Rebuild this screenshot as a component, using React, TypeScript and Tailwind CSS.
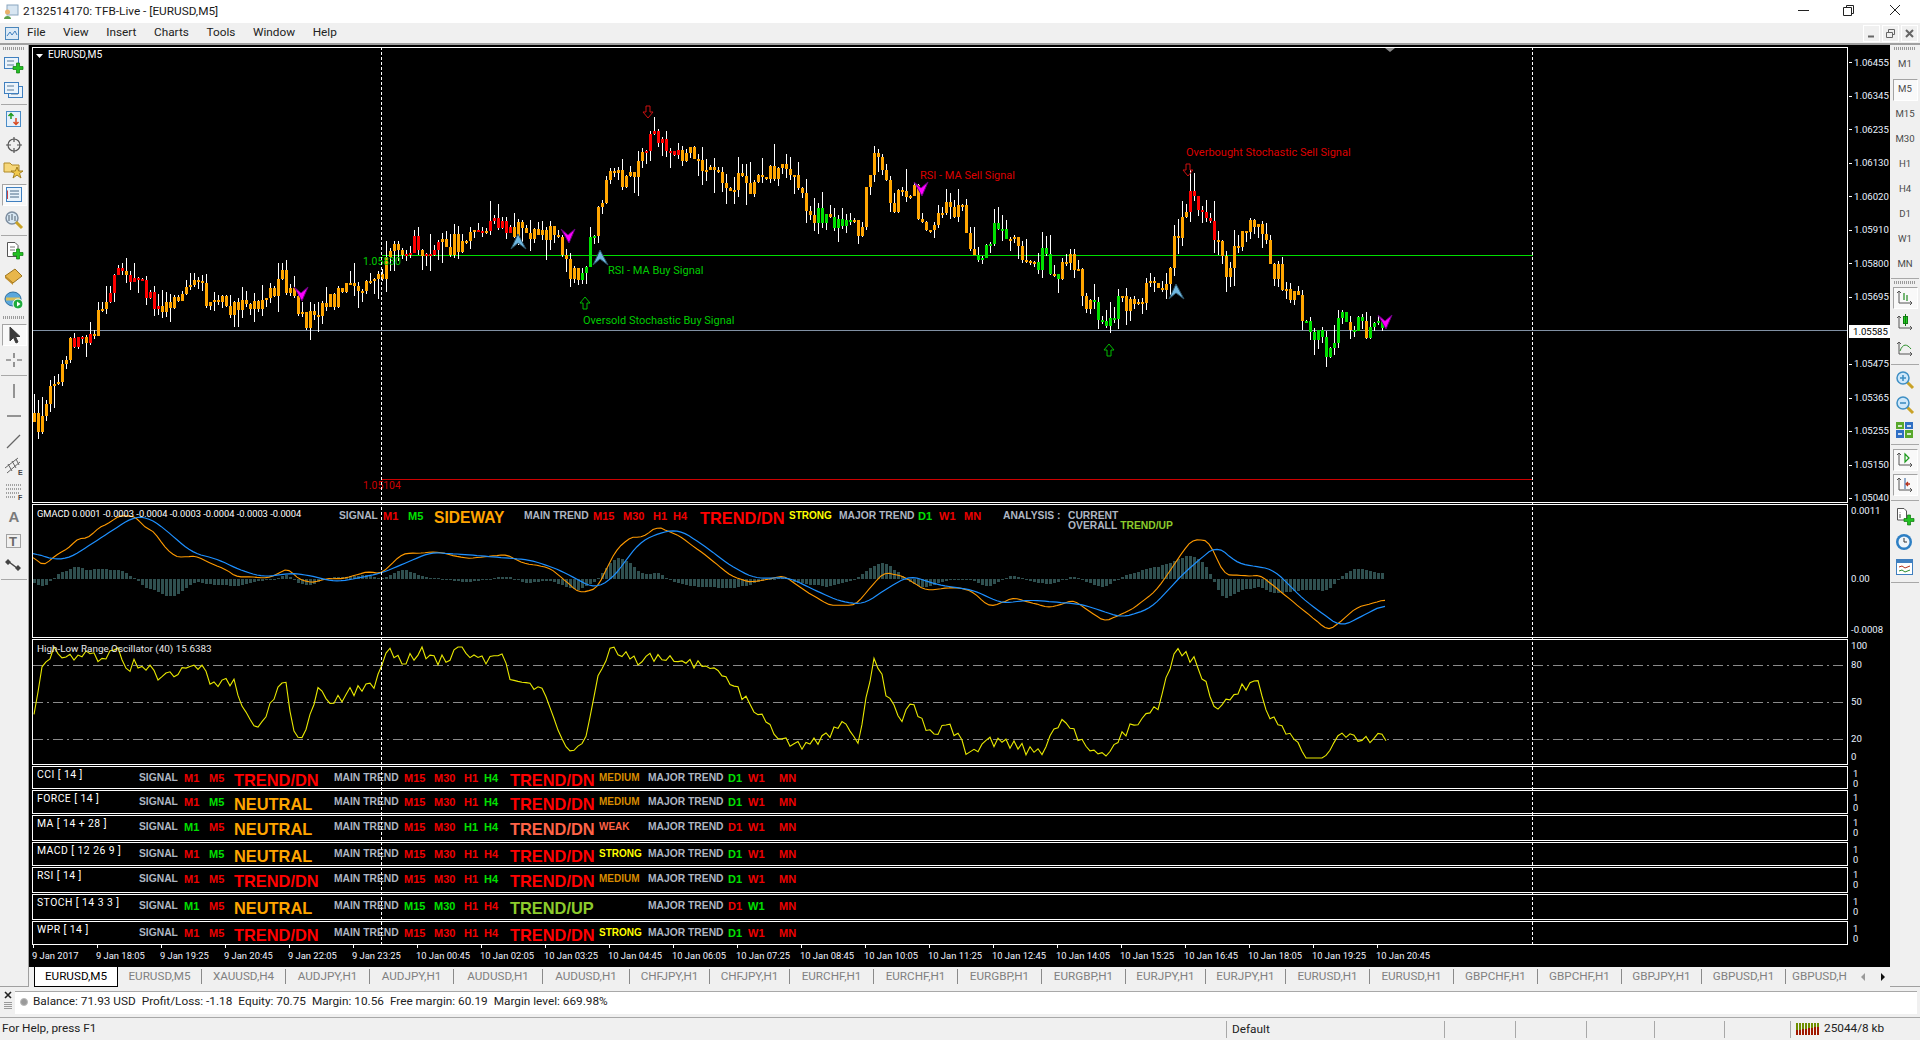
import React from "react";

type P = [number, number];
const interp = (pts: P[], x: number) => {
  if (x <= pts[0][0]) return pts[0][1];
  for (let i = 1; i < pts.length; i++) {
    if (x <= pts[i][0]) {
      const [a, b] = pts[i - 1];
      const [c, d] = pts[i];
      return b + ((d - b) * (x - a)) / (c - a || 1);
    }
  }
  return pts[pts.length - 1][1];
};
let seed = 12345;
const rnd = () => {
  seed = (seed * 16807) % 2147483647;
  return seed / 2147483647;
};
const K = 1920 / 1568;
const img = (a: number[][]): P[] => a.map(([x, y]) => [x * K, y * K]);

const env: P[] = [
  [34, 422], [37, 428], [45, 417], [50, 377], [62, 370], [73, 337], [93, 333], [104, 300], [122, 263], [141, 288], [159, 306],
  [190, 284], [214, 302], [239, 312], [263, 298], [284, 276], [300, 325], [324, 300], [361, 288], [382, 276], [398, 245],
  [422, 245], [459, 245], [484, 230], [500, 223], [511, 233], [531, 230], [549, 232], [565, 247], [569, 270], [585, 273],
  [591, 243], [600, 197], [609, 178], [634, 180], [645, 150], [654, 140], [676, 157], [692, 155], [712, 170], [721, 188],
  [737, 180], [745, 190], [768, 172], [790, 172], [801, 192], [808, 213], [826, 220], [848, 217], [864, 235], [866, 197],
  [875, 153], [882, 167], [893, 207], [904, 190], [913, 188], [917, 213], [931, 223], [946, 208], [962, 210], [966, 233],
  [975, 255], [982, 248], [998, 228], [1013, 237], [1022, 253], [1033, 263], [1045, 257], [1056, 283], [1062, 263], [1076, 260],
  [1080, 287], [1087, 307], [1107, 317], [1118, 305], [1138, 312], [1147, 282], [1165, 290], [1174, 247], [1183, 220], [1191, 197],
  [1212, 233], [1225, 275], [1243, 226], [1258, 226], [1273, 269], [1298, 300], [1310, 331], [1326, 349], [1341, 318], [1365, 331],
  [1377, 316], [1386, 331],
];
const redR: P[] = [[72, 90], [108, 158], [396, 440], [478, 512], [645, 678], [1188, 1215]];
const greenR: P[] = [[580, 594], [812, 853], [975, 1009], [1031, 1062], [1094, 1118], [1304, 1386]];
const inR = (r: P[], x: number) => r.some(([a, b]) => x >= a && x <= b);

const candles = (() => {
  const out: { x: number; t: number; b: number; h: number; l: number; c: string }[] = [];
  let prev = env[0][1];
  for (let x = 34; x <= 1384; x += 4) {
    const cl = interp(env, x) + (rnd() - 0.5) * 22;
    let t = Math.min(prev, cl);
    let b = Math.max(prev, cl);
    if (b - t < 2) b = t + 2;
    const h = t - rnd() * rnd() * 24;
    const l = b + rnd() * rnd() * 24;
    const roll = rnd();
    let c = "#ffa500";
    if (inR(redR, x) && roll < 0.85) c = "#ff0000";
    if (inR(greenR, x) && roll < 0.85) c = "#00e000";
    out.push({ x, t, b, h, l, c });
    prev = cl;
  }
  return out;
})();

const smooth = (pts: P[], win: number, jitter: number): P[] => {
  const raw: number[] = [];
  const xs: number[] = [];
  for (let x = 33; x <= 1386; x += 4) {
    xs.push(x);
    raw.push(interp(pts, x) + (rnd() - 0.5) * jitter);
  }
  return raw.map((_, i) => {
    let s = 0;
    let n = 0;
    for (let j = Math.max(0, i - win); j <= Math.min(raw.length - 1, i + win); j++) {
      s += raw[j];
      n++;
    }
    return [xs[i], s / n] as P;
  });
};

const blueK: P[] = [
  [33, 552], [50, 559], [68, 559], [90, 545], [113, 530], [133, 517], [147, 517], [160, 525], [177, 540], [193, 553], [217, 559],
  [240, 570], [263, 577], [293, 573], [317, 577], [330, 581], [343, 581], [363, 577], [382, 573],
  ...([[130, 205], [175, 172], [230, 178], [300, 188], [350, 195], [400, 225], [460, 280], [490, 255], [540, 140], [580, 110], [610, 105], [650, 150], [700, 215], [740, 250], [800, 248], [850, 290], [890, 320], [930, 328], [970, 280], [1010, 242], [1060, 270], [1120, 285], [1170, 325], [1220, 315], [1310, 328], [1380, 368], [1430, 340], [1490, 230], [1545, 150]] as P[]).map(([x, y]) => [330 + x / 1.742, 495 + y / 3] as P),
  ...img([[1010, 460], [1040, 465], [1065, 490], [1095, 512], [1132, 493]]),
];
const orangeK: P[] = [
  [33, 555], [42, 567], [50, 560], [58, 553], [70, 548], [75, 539], [90, 538], [98, 527], [107, 525], [120, 515], [137, 517], [143, 527],
  [155, 532], [163, 545], [173, 555], [182, 558], [190, 556], [200, 557], [207, 562], [223, 568], [237, 577], [248, 577], [263, 578], [277, 575],
  [288, 567], [297, 578], [310, 583], [325, 579], [347, 578], [365, 572], [382, 573],
  ...([[125, 178], [180, 170], [240, 190], [305, 180], [340, 205], [385, 220], [435, 295], [465, 280], [500, 160], [525, 125], [540, 130], [570, 95], [610, 125], [650, 175], [700, 245], [735, 262], [790, 242], [830, 290], [870, 330], [915, 330], [965, 230], [1000, 245], [1040, 288], [1090, 275], [1120, 290], [1150, 338], [1190, 308], [1255, 340], [1295, 315], [1350, 380], [1400, 340], [1440, 285], [1500, 135], [1530, 135]] as P[]).map(([x, y]) => [330 + x / 1.742, 495 + y / 3] as P),
  ...img([[1000, 470], [1030, 470], [1060, 495], [1085, 515], [1110, 495], [1132, 490]]),
];
const blueA = smooth(blueK, 2, 0);
const orangeA = smooth(orangeK, 1, 1.5);
const toPts = (a: P[]) => a.map(([x, y]) => `${x.toFixed(1)},${y.toFixed(1)}`).join(" ");
const hist = (() => {
  const out: { x: number; y: number; h: number }[] = [];
  for (let x = 34; x <= 1384; x += 4) {
    const raw = (interp(blueA, x) - interp(orangeA, x)) * 0.95;
    const v = Math.max(-26, Math.min(26, raw));
    out.push({ x, y: v > 0 ? 579 - v : 579, h: Math.max(Math.abs(v), 1) });
  }
  return out;
})();
const oscKey = img([
  [28, 580], [35, 540], [45, 530], [55, 540], [70, 530], [80, 540], [95, 530], [105, 545], [115, 540], [130, 555], [150, 545], [160, 540],
  [175, 560], [190, 555], [200, 580], [210, 595], [220, 580], [232, 550], [240, 600], [248, 600], [260, 565], [270, 575], [285, 565], [305, 560],
  [315, 530], [330, 540], [345, 532], [360, 540], [375, 530], [395, 540], [410, 530], [418, 560], [430, 555], [445, 565], [460, 605], [470, 612],
  [478, 600], [490, 545], [500, 530], [520, 540], [545, 535], [575, 545], [600, 560], [620, 585], [635, 600], [650, 610], [660, 610], [675, 600],
  [690, 590], [700, 610], [715, 535], [725, 570], [735, 590], [745, 575], [760, 600], [775, 590], [790, 615], [810, 605], [830, 610], [850, 615],
  [870, 585], [885, 610], [905, 615], [925, 590], [945, 580], [960, 530], [975, 540], [995, 580], [1012, 565], [1027, 550], [1035, 585], [1050, 595],
  [1065, 618], [1085, 615], [1095, 600], [1115, 605], [1125, 598], [1132, 605],
]);
const osc = (() => {
  const out: P[] = [];
  for (let x = 34; x <= 1386; x += 4) out.push([x, Math.min(758, Math.max(647, interp(oscKey, x) + (rnd() - 0.5) * 11))]);
  return out;
})();

const Arrow = ({ x, y, c, down }: { x: number; y: number; c: string; down?: boolean }) => (
  <path transform={`translate(${x} ${y}) rotate(${down ? 180 : 0})`} d="M0 -6 L5 0 L2 0 L2 6 L-2 6 L-2 0 L-5 0 Z" fill="none" stroke={c} strokeWidth="1" />
);
const Dart = ({ x, y, up }: { x: number; y: number; up?: boolean }) =>
  up ? (
    <path transform={`translate(${x} ${y})`} d="M0 -8 L8 7 L0 1 L-7 7 Z" fill="#6fb7e0" stroke="#2c5368" strokeWidth="1" />
  ) : (
    <path transform={`translate(${x} ${y})`} d="M-7 -7 L0 -1 L7 -7 L1 7 Z" fill="#ff00ff" stroke="#6a0080" strokeWidth="1" />
  );

const R = "text-[#ee0000]";
const G = "text-[#00e000]";
const GR = "text-[#aeb6c2]";
const O = "text-[#ffa500]";
const Y = "text-[#ffff00]";
const M = "text-[#d98c00]";
const TM = "text-[#ff6347]";
const UP = "text-[#8ccb2c]";
const RD = "text-[#ff0000]";

const Cell = ({ w, c, t, big, size }: { w: string; c: string; t: string; big?: boolean; size?: string }) => (
  <div className={`${w} ${c} ${big ? "leading-[26px]" : "leading-[22px]"} ${size ?? (big ? "text-[16.4px]" : "text-[10.3px]")} shrink-0 whitespace-nowrap font-bold font-['Liberation_Sans',sans-serif]`}>
    {t}
  </div>
);

const rows = [
  { label: "CCI [ 14 ]", h: "h-[23px]", m1: R, m5: R, s: "TREND/DN", sc: RD, m15: R, m30: R, h1: R, h4: G, t: "TREND/DN", tc: RD, st: "MEDIUM", stc: M, d1: G, w1: R, mn: R },
  { label: "FORCE [ 14 ]", h: "h-[24px]", m1: R, m5: G, s: "NEUTRAL", sc: O, m15: R, m30: R, h1: R, h4: G, t: "TREND/DN", tc: RD, st: "MEDIUM", stc: M, d1: G, w1: R, mn: R },
  { label: "MA [ 14 + 28 ]", h: "h-[26px]", m1: G, m5: R, s: "NEUTRAL", sc: O, m15: R, m30: R, h1: G, h4: G, t: "TREND/DN", tc: TM, st: "WEAK", stc: TM, d1: R, w1: R, mn: R },
  { label: "MACD [ 12 26 9 ]", h: "h-[24px]", m1: R, m5: G, s: "NEUTRAL", sc: O, m15: R, m30: R, h1: R, h4: R, t: "TREND/DN", tc: RD, st: "STRONG", stc: Y, d1: G, w1: R, mn: R },
  { label: "RSI [ 14 ]", h: "h-[26px]", m1: R, m5: R, s: "TREND/DN", sc: RD, m15: R, m30: R, h1: R, h4: G, t: "TREND/DN", tc: RD, st: "MEDIUM", stc: M, d1: G, w1: R, mn: R },
  { label: "STOCH [ 14 3 3 ]", h: "h-[26px]", m1: G, m5: R, s: "NEUTRAL", sc: O, m15: G, m30: G, h1: R, h4: R, t: "TREND/UP", tc: UP, st: "", stc: M, d1: R, w1: G, mn: R },
  { label: "WPR [ 14 ]", h: "h-[24px]", m1: R, m5: R, s: "TREND/DN", sc: RD, m15: R, m30: R, h1: R, h4: R, t: "TREND/DN", tc: RD, st: "STRONG", stc: Y, d1: G, w1: R, mn: R },
];
const prices = ["1.06455", "1.06345", "1.06235", "1.06130", "1.06020", "1.05910", "1.05800", "1.05695", "1.05585", "1.05475", "1.05365", "1.05255", "1.05150", "1.05040"];
const times = ["9 Jan 2017", "9 Jan 18:05", "9 Jan 19:25", "9 Jan 20:45", "9 Jan 22:05", "9 Jan 23:25", "10 Jan 00:45", "10 Jan 02:05", "10 Jan 03:25", "10 Jan 04:45", "10 Jan 06:05", "10 Jan 07:25", "10 Jan 08:45", "10 Jan 10:05", "10 Jan 11:25", "10 Jan 12:45", "10 Jan 14:05", "10 Jan 15:25", "10 Jan 16:45", "10 Jan 18:05", "10 Jan 19:25", "10 Jan 20:45"];
const tabs = [
  ["EURUSD,M5", "w-[84px]"], ["XAUUSD,H4", "w-[84px]"], ["AUDJPY,H1", "w-[84px]"], ["AUDJPY,H1", "w-[84px]"], ["AUDUSD,H1", "w-[89px]"], ["AUDUSD,H1", "w-[87px]"],
  ["CHFJPY,H1", "w-[80px]"], ["CHFJPY,H1", "w-[80px]"], ["EURCHF,H1", "w-[84px]"], ["EURCHF,H1", "w-[84px]"], ["EURGBP,H1", "w-[84px]"], ["EURGBP,H1", "w-[84px]"],
  ["EURJPY,H1", "w-[80px]"], ["EURJPY,H1", "w-[80px]"], ["EURUSD,H1", "w-[84px]"], ["EURUSD,H1", "w-[84px]"], ["GBPCHF,H1", "w-[84px]"], ["GBPCHF,H1", "w-[84px]"],
  ["GBPJPY,H1", "w-[80px]"], ["GBPUSD,H1", "w-[84px]"],
];

const Grip = ({ h }: { h: string }) => (
  <div className={`${h} flex items-center justify-center shrink-0`}>
    <div className="w-[22px] h-[3px] bg-[repeating-linear-gradient(90deg,#9a9a9a_0_1px,transparent_1px_2px)]" />
  </div>
);
const Sep = ({ h }: { h: string }) => (
  <div className={`${h} flex items-center shrink-0`}>
    <div className="w-full mx-[1px] h-px bg-[#a8a8a8]" />
  </div>
);
const Tool = ({ children, on, h = "h-[25px]" }: { children: React.ReactNode; on?: boolean; h?: string }) => (
  <div className={`${h} flex items-center justify-center shrink-0`}>
    <div className={`w-[25px] h-[22px] flex items-center justify-center ${on ? "bg-[#f9f9f9] border border-t-[#a4a4a4] border-l-[#a4a4a4] border-r-white border-b-white" : ""}`}>{children}</div>
  </div>
);
const I = ({ children }: { children: React.ReactNode }) => (
  <svg width="22" height="20" viewBox="0 0 22 20" fill="none">{children}</svg>
);
const Plus = ({ x = 13, y = 12 }: { x?: number; y?: number }) => (
  <path transform={`translate(${x} ${y})`} d="M-1.5 -5 H1.5 V-1.5 H5 V1.5 H1.5 V5 H-1.5 V1.5 H-5 V-1.5 H-1.5 Z" fill="#22c122" stroke="#0b7a0b" strokeWidth=".7" />
);
const Win = ({ x, y, w = 14, h = 11 }: { x: number; y: number; w?: number; h?: number }) => (
  <g>
    <rect x={x + 0.5} y={y + 0.5} width={w} height={h} fill="#eaf3fb" stroke="#3f7fbf" />
    <path d={`M${x + 3} ${y + 4}H${x + 10}M${x + 3} ${y + 8}H${x + 10}`} stroke="#5a7b98" />
  </g>
);
const Axis = () => <path d="M5 3V15H18M3 5L5 3L7 5M16 13L18 15L16 17" stroke="#555" fill="none" />;
const Mag = ({ c }: { c: string }) => (
  <g>
    <path d="M13 12L19 18" stroke="#c9a227" strokeWidth="3" />
    <circle cx="9" cy="8" r="6" fill="#cfe8fa" stroke="#3f8fc4" strokeWidth="1.5" />
    <path d={c} stroke="#3f8fc4" strokeWidth="1.6" />
  </g>
);

const leftA = [
  <I key="a"><Win x={1} y={2} /><Plus x={15} y={13} /></I>,
  <I key="b"><Win x={5} y={6} /><Win x={1} y={2} /></I>,
];
const leftB = [
  <I key="c"><rect x="3.5" y="1.5" width="14" height="15" fill="#e6f1fb" stroke="#4a8cc7" /><path d="M8 9V4M5.5 6L8 3.5L10.5 6" stroke="#1f9a1f" strokeWidth="1.5" /><path d="M13 8V14M10.5 12L13 14.5L15.5 12" stroke="#d9481f" strokeWidth="1.5" /></I>,
  <I key="d"><circle cx="11" cy="10" r="6" stroke="#555" strokeWidth="1.2" /><path d="M11 2V7M11 13V18M3 10H8M14 10H19" stroke="#555" strokeWidth="1.2" /></I>,
  <I key="e"><path d="M1 3H7L9 5H16V12H1Z" fill="#f6d77a" stroke="#b08a28" /><path d="M14 7L15.6 11H20L16.5 13.5L18 18L14 15L10 18L11.5 13.5L8 11H12.4Z" fill="#f2c94c" stroke="#a37f1e" /></I>,
];
const leftC = [
  <I key="g"><circle cx="9" cy="8" r="6" fill="#d8e8f4" stroke="#7d8ea0" strokeWidth="1.5" /><path d="M6 5V11M9 4V10M12 6V11" stroke="#52606e" /><path d="M13 12L19 18" stroke="#c9a227" strokeWidth="3" /></I>,
];
const leftD = [
  <I key="h"><path d="M4.5 1.5H12L15 4.5V15.5H4.5Z" fill="#fff" stroke="#555" /><path d="M7 6H12M7 9H12" stroke="#777" /><Plus x={15} y={13} /></I>,
  <I key="i"><path d="M2 10L12 3L19 10L10 17Z" fill="#e8b64a" stroke="#9b7420" /><path d="M2 10L10 17V19L2 12Z" fill="#c08d2a" /></I>,
  <I key="j"><ellipse cx="10" cy="8" rx="8" ry="7" fill="#5aa7dc" stroke="#2e6f9f" /><path d="M3 8H17" stroke="#d8c05a" strokeWidth="3" /><circle cx="15" cy="13" r="5" fill="#1eab3c" stroke="#fff" /><path d="M14 10.5L17.5 13L14 15.5Z" fill="#fff" /></I>,
];
const leftE = [
  <I key="k"><path d="M7 2L7 16L10.5 12.5L13 18L15 17L12.5 11.5L17 11.5Z" fill="#3a3a3a" stroke="#3a3a3a" /></I>,
  <I key="l"><path d="M11 3V8M11 12V17M3 10H8M14 10H19" stroke="#555" strokeWidth="1.2" /></I>,
];
const leftF = [
  <I key="m"><path d="M11 3V17" stroke="#555" strokeWidth="1.2" /></I>,
  <I key="n"><path d="M4 10H18" stroke="#555" strokeWidth="1.2" /></I>,
  <I key="o"><path d="M4 17L17 4" stroke="#666" strokeWidth="1.2" /></I>,
  <I key="p"><path d="M2 12L15 2M4 17L17 6M5 8L9 15M9 5L13 12M13 3L16 9" stroke="#666" strokeWidth="1" /><text x="15" y="19" fontSize="7" fontWeight="700" fill="#444" fontFamily="Liberation Sans">E</text></I>,
  <I key="q"><path d="M3 4H19M3 8H19M3 12H16" stroke="#555" strokeDasharray="1 1" /><path d="M3 16H13" stroke="#555" strokeDasharray="1 1" /><text x="15" y="19" fontSize="7" fontWeight="700" fill="#444" fontFamily="Liberation Sans">F</text></I>,
  <I key="r"><text x="5.5" y="16" fontSize="15" fontWeight="700" fill="#7a7a7a" fontFamily="Liberation Sans">A</text></I>,
  <I key="s"><rect x="3.5" y="3.5" width="14" height="13" stroke="#555" strokeDasharray="1 1" /><text x="6" y="15" fontSize="13" fontWeight="700" fill="#6a6a6a" fontFamily="Liberation Sans">T</text></I>,
  <I key="t"><path d="M5 3L8 6L5 9L2 6ZM15 9L18 12L15 15L12 12Z" fill="#444" /><path d="M6 6L14 12" stroke="#444" strokeWidth="1.5" /></I>,
];

const Row = ({ r }: { r: (typeof rows)[number] }) => (
  <div className={`${r.h} flex shrink-0`}>
    <div className="w-[1816px] border border-white flex items-start pl-[4px] shrink-0 overflow-visible">
      <div className="w-[102px] shrink-0 leading-[16px] text-[10.4px] tracking-[0.45px] text-white">{r.label}</div>
      <Cell w="w-[45px]" c={GR} t="SIGNAL" />
      <Cell w="w-[25px]" c={r.m1} t="M1" size="text-[11px]" />
      <Cell w="w-[25px]" c={r.m5} t="M5" size="text-[11px]" />
      <Cell w="w-[100px]" c={r.sc} t={r.s} big />
      <Cell w="w-[70px]" c={GR} t="MAIN TREND" />
      <Cell w="w-[30px]" c={r.m15} t="M15" size="text-[11px]" />
      <Cell w="w-[30px]" c={r.m30} t="M30" size="text-[11px]" />
      <Cell w="w-[20px]" c={r.h1} t="H1" size="text-[11px]" />
      <Cell w="w-[26px]" c={r.h4} t="H4" size="text-[11px]" />
      <Cell w="w-[89px]" c={r.tc} t={r.t} big />
      <Cell w="w-[49px]" c={r.stc} t={r.st} size="text-[10px]" />
      <Cell w="w-[80px]" c={GR} t="MAJOR TREND" />
      <Cell w="w-[20px]" c={r.d1} t="D1" size="text-[11px]" />
      <Cell w="w-[31px]" c={r.w1} t="W1" size="text-[11px]" />
      <Cell w="w-[40px]" c={r.mn} t="MN" size="text-[11px]" />
    </div>
    <div className="w-[42px] flex flex-col justify-between py-[3px] pl-[5px] text-[9.3px] leading-[10px] text-[#e8f2ff]">
      <div>1</div>
      <div>0</div>
    </div>
  </div>
);

const Tab = ({ t, w }: { t: string; w: string }) => (
  <div className={`${w} shrink-0 h-[15px] border-r border-[#8a8a8a] text-center text-[#808080] leading-[15px] text-[11.7px]`}>{t}</div>
);

const Note = ({ cls, t }: { cls: string; t: string }) => (
  <div className={`absolute whitespace-nowrap leading-[12px] ${cls}`}>{t}</div>
);
const AxisLabel = ({ cls, t }: { cls: string; t: string }) => (
  <div className={`absolute left-[3px] text-[9.6px] leading-[12px] text-[#e8f2ff] ${cls}`}>{t}</div>
);

export default function App() {
  return (
    <div className="w-[1920px] h-[1040px] overflow-hidden flex flex-col bg-[#f0f0f0] font-['Roboto',sans-serif] text-black">
      {/* title bar */}
      <div className="h-[23px] bg-white flex items-center shrink-0">
        <svg className="ml-[3px] mr-[4px]" width="16" height="16" viewBox="0 0 16 16">
          <rect x="4" y="1" width="11" height="10" fill="#d8e6f2" stroke="#8aa6bf" />
          <circle cx="4.5" cy="8" r="2.5" fill="#e8b06a" />
          <path d="M1 15C1 11 8 11 8 15Z" fill="#5aa04a" />
        </svg>
        <span className="text-[11.8px] text-[#1a1a1a]">2132514170: TFB-Live - [EURUSD,M5]</span>
        <div className="ml-auto flex items-center">
          <svg width="150" height="23" viewBox="0 0 150 23" fill="none" stroke="#222">
            <path d="M28 10.5H39" />
            <path d="M73.5 7.5H81.5V15.5H73.5ZM76.5 7.5V5.5H83.5V13.5H81.5" />
            <path d="M120 5L130 15M130 5L120 15" />
          </svg>
        </div>
      </div>
      {/* menu bar */}
      <div className="h-[22px] flex items-center shrink-0 border-b-2 border-[#a0a0a0] bg-[#f0f0f0]">
        <svg className="ml-[5px] mr-[7px]" width="15" height="15" viewBox="0 0 15 15" fill="none">
          <rect x=".5" y="1.5" width="13" height="12" fill="#dceaf6" stroke="#4a86bb" />
          <path d="M2 10L5 6L7 9L10 5L12 9" stroke="#3f7fbf" />
        </svg>
        <div className="flex gap-[17.6px] text-[11.8px] text-[#222]">
          <span>File</span>
          <span>View</span>
          <span>Insert</span>
          <span>Charts</span>
          <span>Tools</span>
          <span>Window</span>
          <span>Help</span>
        </div>
        <div className="ml-auto mr-[2px] flex gap-[2px]">
          <div className="w-[17px] h-[17px] border border-white flex items-center justify-center">
            <svg width="11" height="11" viewBox="0 0 11 11"><path d="M2 8.5H8" stroke="#666" strokeWidth="2" /></svg>
          </div>
          <div className="w-[17px] h-[17px] border border-white flex items-center justify-center">
            <svg width="11" height="11" viewBox="0 0 11 11" fill="none" stroke="#666"><path d="M1.5 4.5H7.5V9.5H1.5ZM3.5 4V1.5H9.5V6.5H8" /></svg>
          </div>
          <div className="w-[17px] h-[17px] border border-white flex items-center justify-center">
            <svg width="11" height="11" viewBox="0 0 11 11"><path d="M2 2L9 9M9 2L2 9" stroke="#666" strokeWidth="2" /></svg>
          </div>
        </div>
      </div>

      {/* main */}
      <div className="h-[942px] flex shrink-0">
        {/* left toolbar */}
        <div className="w-[29px] shrink-0 flex flex-col border-r border-b border-[#a0a0a0]">
          <Grip h="h-[7px]" />
          {leftA.map((x) => <Tool key={x.key}>{x}</Tool>)}
          <Sep h="h-[5px]" />
          {leftB.map((x) => <Tool key={x.key}>{x}</Tool>)}
          <Tool on><I><rect x="3.5" y="2.5" width="15" height="14" fill="#e9f3fc" stroke="#3f7fbf" /><path d="M7 6H16M7 9H16M7 12H16" stroke="#4a6a88" /><path d="M4.5 5.5V14" stroke="#c44" /></I></Tool>
          {leftC.map((x) => <Tool key={x.key}>{x}</Tool>)}
          <Sep h="h-[6px]" />
          {leftD.map((x) => <Tool key={x.key}>{x}</Tool>)}
          <Grip h="h-[9px]" />
          {leftE.map((x, i) => <Tool key={x.key} on={i === 0}>{x}</Tool>)}
          <Sep h="h-[6px]" />
          {leftF.map((x) => <Tool key={x.key}>{x}</Tool>)}
          <Sep h="h-[2px]" />
        </div>

        {/* chart column */}
        <div className="relative w-[1861px] shrink-0 bg-black flex flex-col pl-[3px] pt-[2px] gap-px">
          <div className="absolute left-[352px] top-[2px] h-[898px] w-px border-l border-dashed border-white z-10" />
          <div className="absolute left-[1503px] top-[2px] h-[898px] w-px border-l border-dashed border-white z-10" />

          {/* main pane */}
          <div className="h-[456px] flex shrink-0">
            <div className="relative w-[1816px] border border-white shrink-0">
              <svg className="absolute left-0 top-0" width="1814" height="454" viewBox="33 48 1814 454">
                <path d="M382 255.5H1533" stroke="#00dd00" />
                <path d="M382 479.5H1533" stroke="#cc0000" />
                <path d="M33 330.5H1847" stroke="#8090a4" />
                <path d="M1385 48H1395L1390 52Z" fill="#8a8a8a" />
                <g shapeRendering="crispEdges">
                  {candles.map((d) => (
                    <g key={d.x}>
                      <rect x={d.x} y={d.h} width="1" height={d.l - d.h} fill="#fff" />
                      <rect x={d.x - 1} y={d.t} width="3" height={d.b - d.t} fill={d.c} />
                    </g>
                  ))}
                </g>
                <Arrow x={648} y={112} c="#cc1111" down />
                <Arrow x={1188} y={170} c="#cc1111" down />
                <Arrow x={585} y={303} c="#00bb00" />
                <Arrow x={1109} y={350} c="#00bb00" />
                <Dart x={301} y={294} />
                <Dart x={568} y={236} />
                <Dart x={921} y={189} />
                <Dart x={1385} y={322} />
                <Dart x={518} y={242} up />
                <Dart x={600} y={258} up />
                <Dart x={1176} y={292} up />
                <path d="M36 54H43L39.5 58Z" fill="#fff" />
              </svg>
              <Note cls="left-[15px] top-[1px] text-white text-[10.2px]" t="EURUSD,M5" />
              <Note cls="left-[330px] top-[208px] text-[#00cc00] text-[10.4px]" t="1.05830" />
              <Note cls="left-[330px] top-[432px] text-[#cc0000] text-[10.4px]" t="1.05104" />
              <Note cls="left-[887px] top-[122px] text-[#dd0000] text-[11px]" t="RSI - MA Sell Signal" />
              <Note cls="left-[575px] top-[217px] text-[#00cc00] text-[11px]" t="RSI - MA Buy Signal" />
              <Note cls="left-[550px] top-[267px] text-[#00cc00] text-[11px]" t="Oversold Stochastic Buy Signal" />
              <Note cls="left-[1153px] top-[99px] text-[#dd0000] text-[11px]" t="Overbought Stochastic Sell Signal" />
            </div>
            <div className="relative w-[42px]">
              <div className="-mt-[1px] flex flex-col">
                {prices.map((p) =>
                  p === "1.05585" ? (
                    <div key={p} className="h-[33.54px] flex items-center">
                      <div className="ml-px w-[41px] h-[13px] bg-white text-black text-[9.6px] leading-[13px] pl-[4px]">{p}</div>
                    </div>
                  ) : (
                    <div key={p} className="h-[33.54px] flex items-center gap-[2px] text-[9.6px] text-[#e8f2ff]">
                      <div className="w-[3px] h-px bg-white ml-px" />
                      <span>{p}</span>
                    </div>
                  )
                )}
              </div>
            </div>
          </div>

          {/* MACD pane */}
          <div className="h-[134px] flex shrink-0">
            <div className="relative w-[1816px] border border-white shrink-0">
              <svg className="absolute left-0 top-0" width="1814" height="132" viewBox="33 505 1814 132">
                <g shapeRendering="crispEdges">
                  {hist.map((b) => (
                    <rect key={b.x} x={b.x - 1} y={b.y} width="3" height={b.h} fill="#2f4f4f" />
                  ))}
                </g>
                <polyline points={toPts(orangeA)} fill="none" stroke="#ff9a00" strokeWidth="1.1" />
                <polyline points={toPts(blueA)} fill="none" stroke="#1e90ff" strokeWidth="1.2" />
              </svg>
              <Note cls="left-[4px] top-[3px] text-white text-[9.3px]" t="GMACD 0.0001 -0.0003 -0.0004 -0.0003 -0.0004 -0.0003 -0.0004" />
              <div className="absolute left-[306px] top-0 flex items-start">
                <Cell w="w-[44px]" c={GR} t="SIGNAL" />
                <Cell w="w-[25px]" c={R} t="M1" size="text-[11px]" />
                <Cell w="w-[26px]" c={G} t="M5" size="text-[11px]" />
                <Cell w="w-[90px]" c={O} t="SIDEWAY" big size="text-[15.6px]" />
                <Cell w="w-[69px]" c={GR} t="MAIN TREND" />
                <Cell w="w-[30px]" c={R} t="M15" size="text-[11px]" />
                <Cell w="w-[30px]" c={R} t="M30" size="text-[11px]" />
                <Cell w="w-[20px]" c={R} t="H1" size="text-[11px]" />
                <Cell w="w-[27px]" c={R} t="H4" size="text-[11px]" />
                <Cell w="w-[89px]" c={RD} t="TREND/DN" big />
                <Cell w="w-[50px]" c={Y} t="STRONG" size="text-[10px]" />
                <Cell w="w-[79px]" c={GR} t="MAJOR TREND" />
                <Cell w="w-[21px]" c={G} t="D1" size="text-[11px]" />
                <Cell w="w-[25px]" c={R} t="W1" size="text-[11px]" />
                <Cell w="w-[39px]" c={R} t="MN" size="text-[11px]" />
                <Cell w="w-[65px]" c={GR} t="ANALYSIS :" />
                <div className="pt-[6px] text-[10.3px] leading-[10px] font-bold font-['Liberation_Sans',sans-serif] whitespace-nowrap">
                  <div className={GR}>CURRENT</div>
                  <div className="flex gap-[3px]">
                    <span className={GR}>OVERALL</span>
                    <span className={UP}>TREND/UP</span>
                  </div>
                </div>
              </div>
            </div>
            <div className="relative w-[42px]">
              <AxisLabel cls="top-[1px]" t="0.0011" />
              <AxisLabel cls="top-[69px]" t="0.00" />
              <AxisLabel cls="top-[120px]" t="-0.0008" />
            </div>
          </div>

          {/* Oscillator pane */}
          <div className="h-[126px] flex shrink-0">
            <div className="relative w-[1816px] border border-white shrink-0">
              <svg className="absolute left-0 top-0" width="1814" height="124" viewBox="33 640 1814 124">
                <path d="M33 665.5H1847M33 702.5H1847M33 739.5H1847" stroke="#8a8a8a" strokeDasharray="10 4 2 4" />
                <polyline points={toPts(osc)} fill="none" stroke="#e8e800" strokeWidth="1.1" />
              </svg>
              <Note cls="left-[4px] top-[3px] text-[#e8e8e8] text-[9.9px]" t="High-Low Range Oscillator (40) 15.6383" />
            </div>
            <div className="relative w-[42px]">
              <AxisLabel cls="top-[1px]" t="100" />
              <AxisLabel cls="top-[20px]" t="80" />
              <AxisLabel cls="top-[57px]" t="50" />
              <AxisLabel cls="top-[94px]" t="20" />
              <AxisLabel cls="top-[112px]" t="0" />
            </div>
          </div>

          {rows.map((r) => (
            <Row key={r.label} r={r} />
          ))}

          {/* time axis */}
          <div className="h-[20px] -mt-px flex shrink-0">
            {times.map((t) => (
              <div key={t} className="w-[64px] shrink-0 text-[9.4px] text-[#f0f4ff] leading-[12px] whitespace-nowrap">
                <div className="w-px h-[3px] bg-white ml-px" />
                <div className="mt-[2px]">{t}</div>
              </div>
            ))}
          </div>

          {/* tabs */}
          <div className="-ml-[3px] h-[21px] border-t border-black bg-[#f0f0f0] flex items-start shrink-0 overflow-hidden relative">
            <div className="ml-[5px] w-[84px] h-[20px] shrink-0 bg-white border-x border-b border-black text-center leading-[19px] text-[11.7px] text-black">EURUSD,M5</div>
            <div className="flex mt-[2px]">
              {tabs.map(([t, w], i) => (
                <Tab key={i} t={t} w={w} />
              ))}
              <div className="w-[67px] shrink-0 text-center text-[#808080] leading-[15px] text-[11.7px] h-[15px] overflow-hidden">GBPUSD,H</div>
            </div>
            <div className="absolute right-[5px] top-[3px] flex gap-[14px] items-center h-[14px] bg-[#f0f0f0]">
              <svg width="5" height="8" viewBox="0 0 5 8"><path d="M4 0V8L0 4Z" fill="#9a9a9a" /></svg>
              <svg width="5" height="8" viewBox="0 0 5 8"><path d="M1 0V8L5 4Z" fill="#111" /></svg>
            </div>
          </div>
        </div>

        {/* right toolbar */}
        <div className="w-[30px] shrink-0 flex flex-col text-[9.6px] text-[#4a4a4a] border-b border-[#a0a0a0]">
          <Grip h="h-[7px]" />
          {["M1", "M5", "M15", "M30", "H1", "H4", "D1", "W1", "MN"].map((m) => (
            <Tool key={m} on={m === "M5"}>{m}</Tool>
          ))}
          <Sep h="h-[2px]" />
          <Grip h="h-[6px]" />
          <Tool on><I><Axis /><path d="M10 5V12M13 7V13" stroke="#1f8a1f" strokeWidth="1.2" /></I></Tool>
          <Tool h="h-[26px]"><I><Axis /><rect x="9.5" y="3.5" width="4" height="7" fill="#22d022" stroke="#137a13" /><path d="M11.5 1V13" stroke="#137a13" /></I></Tool>
          <Tool h="h-[26px]"><I><Axis /><path d="M6 12C9 4 13 5 17 10" stroke="#2b8f2b" /></I></Tool>
          <Sep h="h-[5px]" />
          <Tool><I><Mag c="M6 8H12M9 5V11" /></I></Tool>
          <Tool><I><Mag c="M6 8H12" /></I></Tool>
          <Tool>
            <I>
              <rect x="2" y="2" width="8" height="7" fill="#58a82c" />
              <rect x="11" y="2" width="8" height="7" fill="#2f6fc4" />
              <rect x="2" y="10" width="8" height="8" fill="#2f6fc4" />
              <rect x="11" y="10" width="8" height="8" fill="#58a82c" />
              <path d="M4 6H8M13 6H17M4 14H8M13 14H17" stroke="#fff" strokeWidth="1.5" />
            </I>
          </Tool>
          <Sep h="h-[5px]" />
          <Tool on><I><Axis /><path d="M11 4L15 8L11 12Z" fill="none" stroke="#1b9a1b" strokeWidth="1.2" /></I></Tool>
          <Tool on><I><Axis /><path d="M11 3V14" stroke="#2b5f9e" /><path d="M16 9H12M14 7L12 9L14 11" stroke="#b5321c" strokeWidth="1.3" /></I></Tool>
          <Sep h="h-[7px]" />
          <Tool><I><path d="M3.5 1.5H10L12.5 4V13H3.5Z" fill="#fff" stroke="#555" /><path d="M6 7V11M6 5.5V5" stroke="#555" /><Plus x={15} y={13} /></I></Tool>
          <Tool><I><circle cx="10" cy="10" r="8" fill="#2d7fc4" /><circle cx="10" cy="10" r="5.5" fill="#f0f5fa" /><path d="M10 6V10H13" stroke="#333" /></I></Tool>
          <Tool><I><rect x="2.5" y="2.5" width="16" height="15" fill="#fff" stroke="#3f7fbf" /><rect x="3" y="3" width="15" height="3" fill="#3f7fbf" /><path d="M5 10L8 9L11 11L16 9" stroke="#b5321c" /><path d="M5 14L8 13L11 15L16 13" stroke="#2b8f2b" /></I></Tool>
          <Sep h="h-[6px]" />
        </div>
      </div>

      {/* terminal row */}
      <div className="h-[30px] shrink-0 flex items-start pt-[4px]">
        <div className="w-[15px] shrink-0 flex flex-col items-center">
          <svg width="8" height="8" viewBox="0 0 8 8"><path d="M1 1L7 7M7 1L1 7" stroke="#222" strokeWidth="1.6" /></svg>
          <div className="mt-[3px] w-[8px] h-[7px] bg-[repeating-linear-gradient(180deg,#9a9a9a_0_1px,transparent_1px_2px)]" />
        </div>
        <div className="w-[1902px] h-[23px] pb-[2px] bg-white flex items-center text-[11.8px] text-[#222] whitespace-nowrap border-t border-[#a8a8a8]">
          <div className="ml-[5px] mr-[5px] w-[8px] h-[8px] rounded-full bg-[#9a9a9a] border border-[#bbb]" />
          <span>Balance: 71.93 USD</span>
          <span className="ml-[6px]">Profit/Loss: -1.18</span>
          <span className="ml-[6px]">Equity: 70.75</span>
          <span className="ml-[6px]">Margin: 10.56</span>
          <span className="ml-[6px]">Free margin: 60.19</span>
          <span className="ml-[6px]">Margin level: 669.98%</span>
        </div>
      </div>

      {/* status bar */}
      <div className="h-[23px] shrink-0 flex items-center border-t border-[#a8a8a8] text-[11.8px] text-[#222]">
        <div className="w-[1226px] pl-[2px] shrink-0">For Help, press F1</div>
        <div className="w-[218px] h-[17px] pl-[5px] leading-[17px] border-l border-[#a8a8a8] shrink-0">Default</div>
        <div className="w-[71px] h-[17px] border-l border-[#a8a8a8] shrink-0" />
        <div className="w-[71px] h-[17px] border-l border-[#a8a8a8] shrink-0" />
        <div className="w-[68px] h-[17px] border-l border-[#a8a8a8] shrink-0" />
        <div className="w-[70px] h-[17px] border-l border-[#a8a8a8] shrink-0" />
        <div className="w-[66px] h-[17px] border-l border-[#a8a8a8] shrink-0" />
        <div className="h-[17px] border-l border-[#a8a8a8] pl-[5px] flex items-center gap-[4px] shrink-0">
          <svg width="24" height="14" viewBox="0 0 24 14" shapeRendering="crispEdges">
            {[0, 3, 6, 9, 12, 15, 18, 21].map((x, i) => (
              <g key={x}>
                <rect x={x} y={1} width="2" height={7 - i * 0.5} fill="#6f8f00" />
                <rect x={x} y={8 - i * 0.5} width="2" height={5 + i * 0.5} fill="#a01800" />
              </g>
            ))}
          </svg>
          <span>25044/8 kb</span>
        </div>
      </div>
    </div>
  );
}
